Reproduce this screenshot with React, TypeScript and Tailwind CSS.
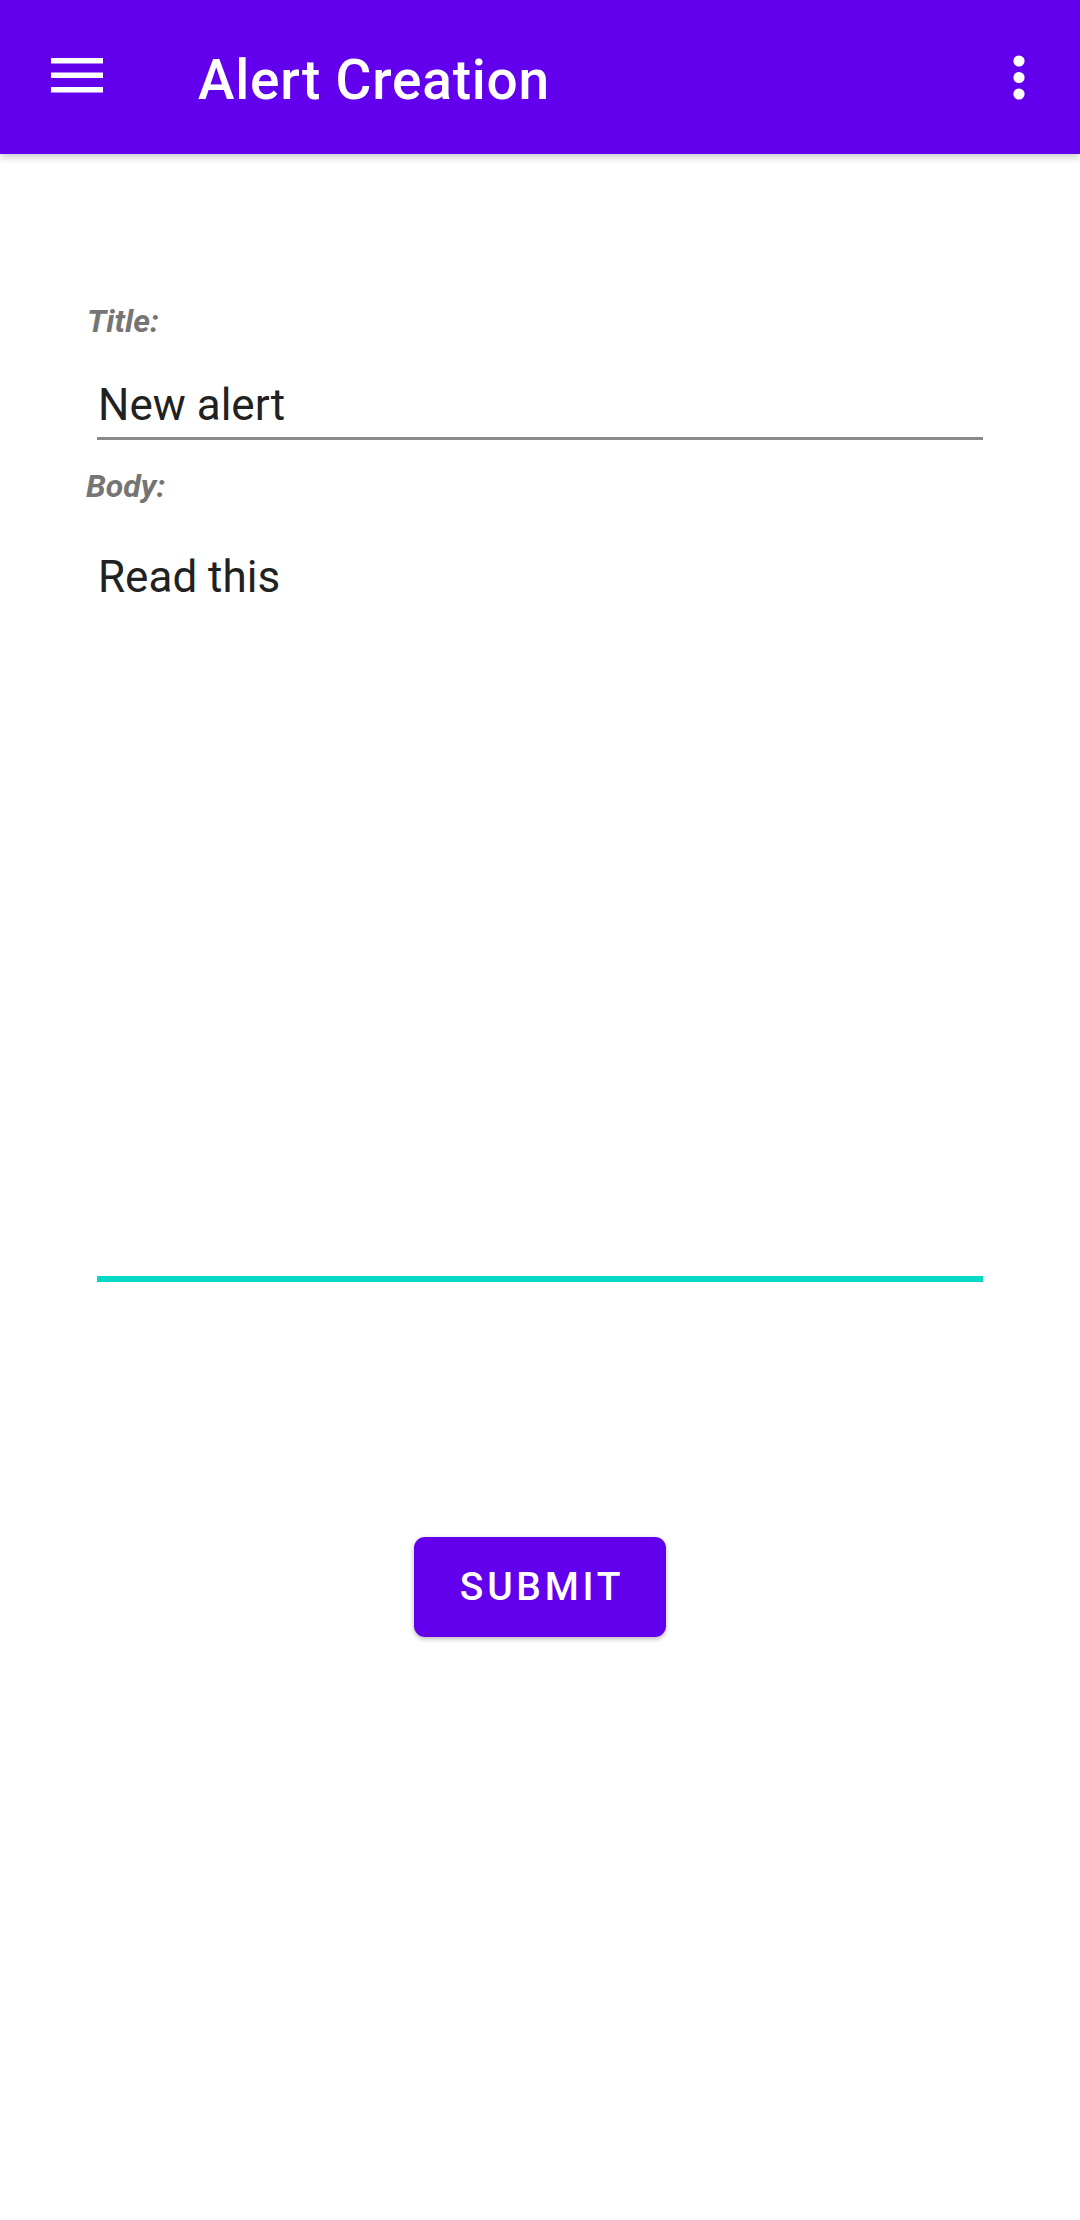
import { useState } from "react"

function MenuIcon() {
    return (
        <svg width="66" height="66" viewBox="0 0 66 66" fill="white">
            <rect x="7" y="14" width="52" height="5.5" />
            <rect x="7" y="28.5" width="52" height="5.5" />
            <rect x="7" y="43" width="52" height="5.5" />
        </svg>
    )
}

function MoreIcon() {
    return (
        <svg width="66" height="66" viewBox="0 0 66 66" fill="white">
            <circle cx="33" cy="17" r="5.6" />
            <circle cx="33" cy="33.5" r="5.6" />
            <circle cx="33" cy="50" r="5.6" />
        </svg>
    )
}

export default function App() {
    const [title] = useState<string>("New alert")
    const [body] = useState<string>("Read this")

    return (
        <div className="w-full min-h-[2220px] bg-white font-['Roboto',sans-serif]">
            <header className="relative z-10 h-[154px] bg-[#6200ee] flex flex-row items-center pl-[44px] pr-[28px] shadow-[0_3px_8px_rgba(0,0,0,0.22)]">
                <MenuIcon />
                <h1 className="ml-[88px] pt-[6px] text-[55px] leading-[64px] font-medium tracking-[0.8px] text-white">Alert Creation</h1>
                <div className="ml-auto">
                    <MoreIcon />
                </div>
            </header>

            <div className="flex flex-col pl-[87px] pr-[97px] pt-[147px]">
                <p className="h-[40px] text-[32px] leading-[40px] font-bold italic text-[#757575]">Title:</p>

                <div className="ml-[10px] mt-[38px] pb-[6px] border-b-[3px] border-[#8a8a8a]">
                    <p className="ml-[1px] text-[44px] leading-[52px] text-[#212121]">{title}</p>
                </div>

                <p className="-ml-[1px] mt-[26px] h-[40px] text-[32px] leading-[40px] font-bold italic text-[#757575]">Body:</p>

                <div className="ml-[10px] mt-[45px] h-[731px] border-b-[6px] border-[#03dac5]">
                    <p className="ml-[1px] text-[44px] leading-[52px] text-[#212121]">{body}</p>
                </div>
            </div>

            <div className="flex flex-row justify-center mt-[255px]">
                <button className="w-[252px] h-[100px] rounded-[11px] bg-[#6200ee] shadow-[0_2px_5px_rgba(0,0,0,0.28)] flex items-center justify-center">
                    <span className="text-[39px] font-medium tracking-[3.7px] text-white pl-[4px] pt-[1px]">SUBMIT</span>
                </button>
            </div>
        </div>
    )
}
